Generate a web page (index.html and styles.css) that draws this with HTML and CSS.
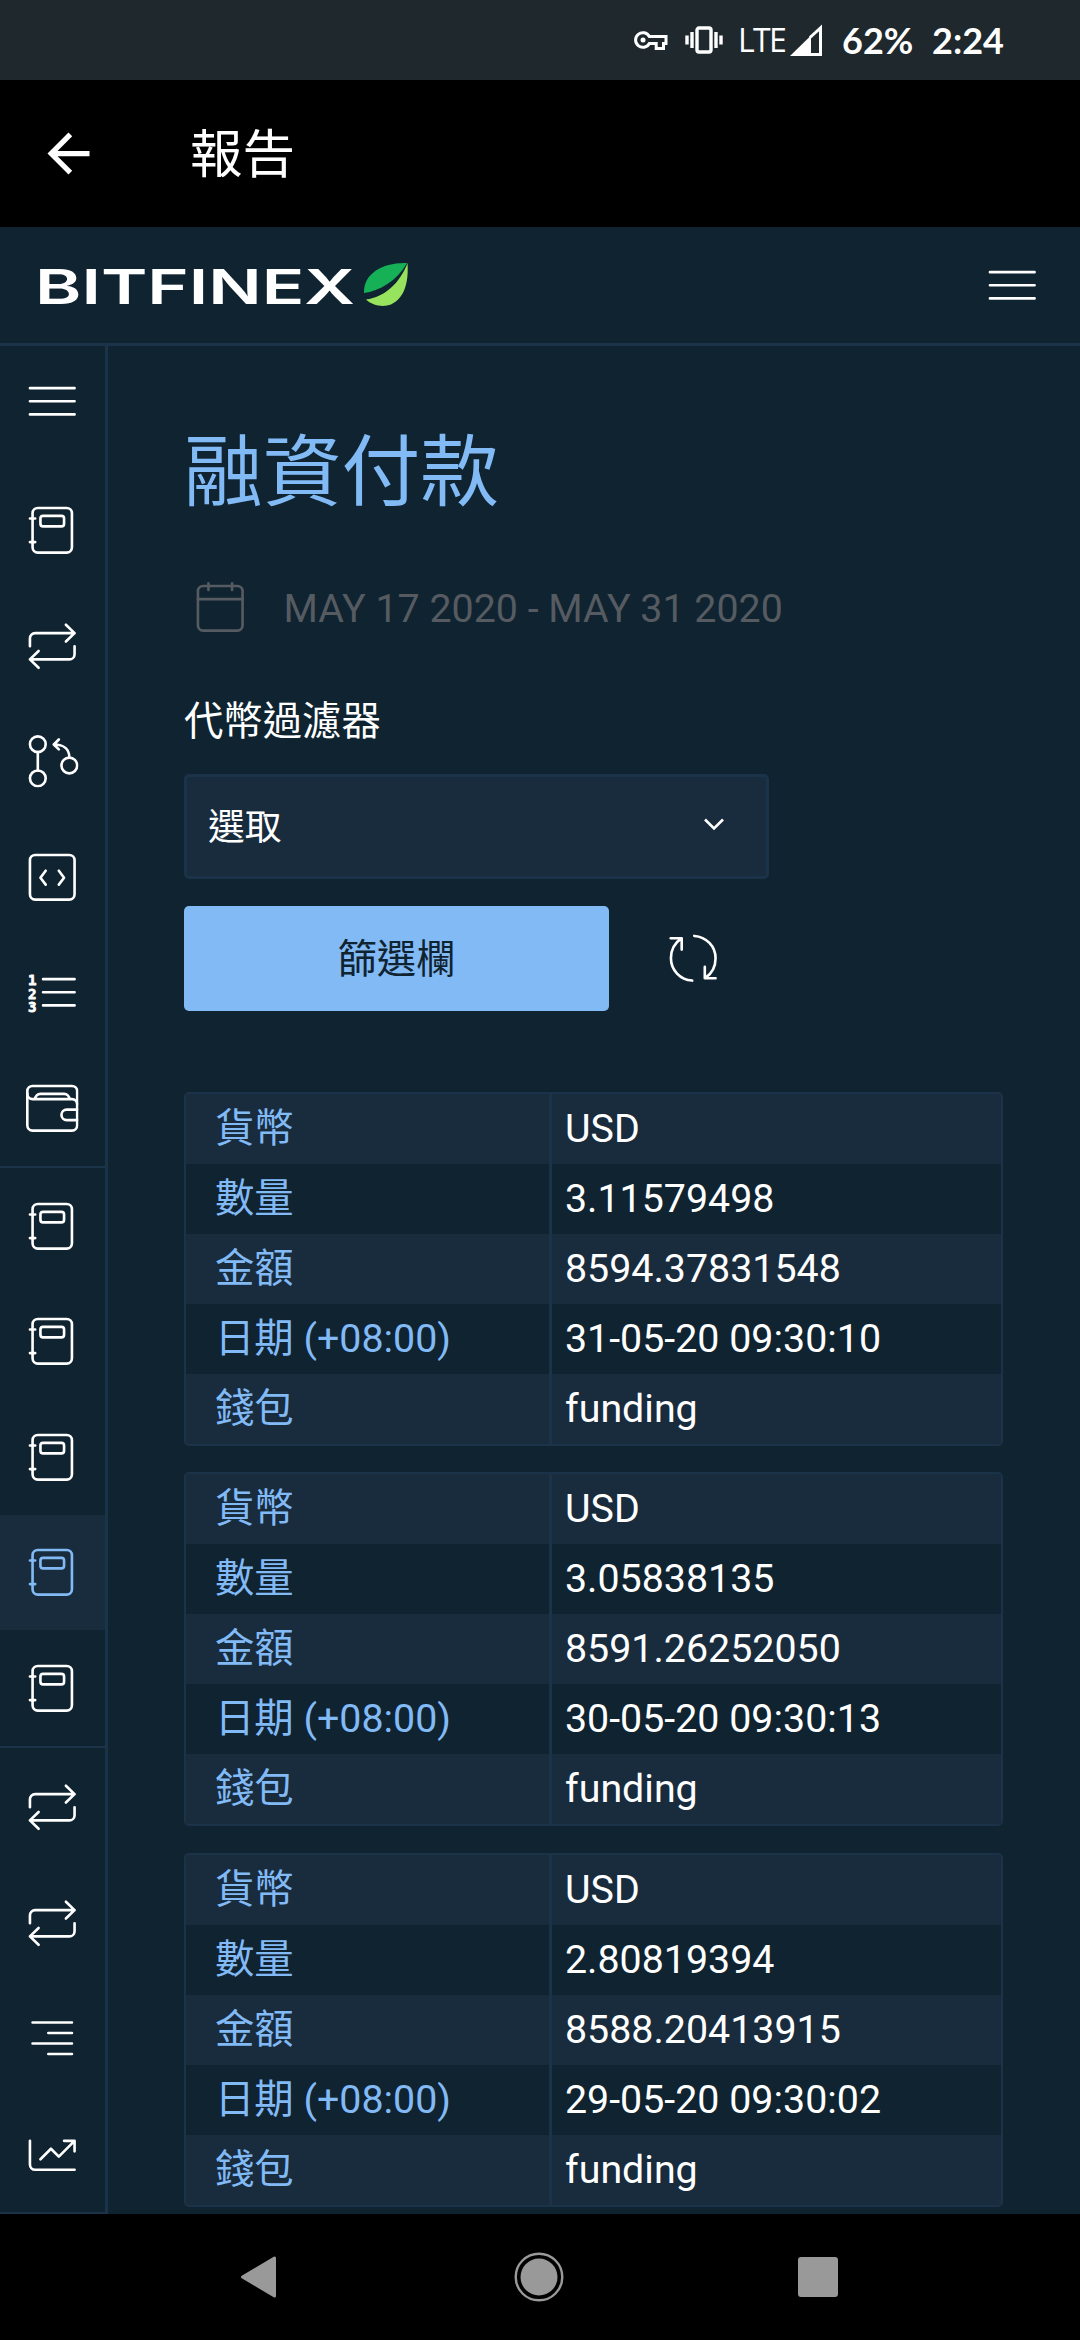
FILE: index.html
```html
<!DOCTYPE html>
<html lang="zh-Hant">
<head>
<meta charset="utf-8">
<title>報告</title>
<link rel="stylesheet" href="styles.css">
</head>
<body>

<svg class="sprite">
  <symbol id="menu" viewBox="0 0 20 20"><path d="M1.5 5h17M1.5 10h17M1.5 15h17"/></symbol>
  <symbol id="book" viewBox="0 0 20 20">
    <rect x="2.5" y="1.5" width="15" height="17" rx="2"/>
    <rect x="5.5" y="4.5" width="9" height="4" rx="1"/>
    <path d="M1.5 5.5h2M1.5 14.5h2"/>
  </symbol>
  <symbol id="swap" viewBox="0 0 20 20">
    <path d="M1.5 10V7a2 2 0 0 1 2-2h15M15.2 1.8 18.5 5l-3.3 3.2M18.5 10v3a2 2 0 0 1-2 2h-15M4.8 11.8 1.5 15l3.3 3.2"/>
  </symbol>
  <symbol id="branch" viewBox="0 0 20 20">
    <circle cx="4.5" cy="3.5" r="3"/><circle cx="4.5" cy="16.5" r="3"/><circle cx="16.5" cy="11.6" r="3"/>
    <path d="M4.5 6.5v7M16.5 8.5c0-3-2-4.9-5.8-4.9M12.5 1.7l-1.9 1.9 1.9 1.9"/>
  </symbol>
  <symbol id="code" viewBox="0 0 20 20">
    <rect x="1.5" y="1.5" width="17" height="17" rx="2"/>
    <path d="M7.5 7.5l-2 2.7 2 2.6M12.5 7.5l2 2.7-2 2.6"/>
  </symbol>
  <symbol id="list" viewBox="0 0 20 20">
    <path d="M6.500 5h12M6.500 10h12M6.500 15h12"/>
    <text x=".8" y="7.300">1</text><text x=".8" y="12.400">2</text><text x=".8" y="17.400">3</text>
  </symbol>
  <symbol id="wallet" viewBox="0 0 20 20">
    <rect x=".5" y="1.5" width="19" height="17" rx="2"/>
    <path d="M.5 4.5a2 2 0 0 0 2 2h15a2 2 0 0 1 2 2M3.5 6.5a2 2 0 0 1 2-2h9a2 2 0 0 1 2 2M19.5 10.5h-4a2 2 0 0 0 0 4h4"/>
  </symbol>
  <symbol id="align" viewBox="0 0 20 20"><path d="M2.5 4h15M8.5 8h9M2.5 12h15M8.5 16h9"/></symbol>
  <symbol id="chart" viewBox="0 0 20 20">
    <path d="M1.5 4.900v9a2 2 0 0 0 2 2h15M5.500 11.900l4-4 3 3 6-6M14.500 4.900h4v4"/>
  </symbol>
</svg>

<div class="statusbar">
  <svg class="key" width="34" height="20" viewBox="0 0 34 20">
    <path d="M15.3 6.5H32v7h-2.500v5h-7.300v-5h-6.900a7.300 7.300 0 1 1 0-7z"/>
    <circle cx="9" cy="10" r="2.5"/>
  </svg>
  <svg class="vibrate" width="38" height="28" viewBox="0 0 38 28">
    <rect x="12" y="2" width="14" height="24" rx="2"/>
    <path d="M7 6v16M2 9.500v9M31 6v16M36 9.500v9"/>
  </svg>
  <span class="lte">LTE</span>
  <svg class="signal" width="33" height="33" viewBox="0 0 33 33">
    <path class="outline" d="M20 13.500 30.500 4v26.500H20"/>
    <path class="fill" d="M0 32 21 11.500V32z"/>
  </svg>
  <span class="battery">62%</span>
  <span class="clock">2:24</span>
</div>

<div class="appbar">
  <svg width="63" height="63" viewBox="0 0 24 24"><path d="M20 11H7.83l5.590-5.590L12 4l-8 8 8 8 1.410-1.410L7.830 13H20v-2z"/></svg>
  <span>報告</span>
</div>

<header class="header">
  <svg class="logo" width="378" height="48" viewBox="-4 0 378 48">
    <text x="-3" y="42.500" textLength="320" lengthAdjust="spacingAndGlyphs">BITFINEX</text>
    <path fill="#16b157" d="M369 2C346 1 325 12 326 32c15-2 33-12 43-30z"/>
    <path fill="#97e35e" d="M369.500 2C362 22 347 36 328 38.500c6 6 17 8 25 5C365 38 371 24 369.500 2z"/>
  </svg>
  <svg class="icon"><use href="#menu"/></svg>
</header>

<div class="wrap">
  <nav class="sidebar">
    <div class="toggle"><svg class="icon"><use href="#menu"/></svg></div>
    <div class="group">
      <a class="item"><svg class="icon"><use href="#book"/></svg></a>
      <a class="item"><svg class="icon"><use href="#swap"/></svg></a>
      <a class="item"><svg class="icon"><use href="#branch"/></svg></a>
      <a class="item"><svg class="icon"><use href="#code"/></svg></a>
      <a class="item"><svg class="icon"><use href="#list"/></svg></a>
      <a class="item"><svg class="icon"><use href="#wallet"/></svg></a>
    </div>
    <div class="group">
      <a class="item"><svg class="icon"><use href="#book"/></svg></a>
      <a class="item"><svg class="icon"><use href="#book"/></svg></a>
      <a class="item"><svg class="icon"><use href="#book"/></svg></a>
      <a class="item active"><svg class="icon"><use href="#book"/></svg></a>
      <a class="item"><svg class="icon"><use href="#book"/></svg></a>
    </div>
    <div class="group last">
      <a class="item"><svg class="icon"><use href="#swap"/></svg></a>
      <a class="item"><svg class="icon"><use href="#swap"/></svg></a>
      <a class="item"><svg class="icon"><use href="#align"/></svg></a>
      <a class="item"><svg class="icon"><use href="#chart"/></svg></a>
    </div>
  </nav>

  <main class="content">
    <h1>融資付款</h1>
    <div class="dates">
      <svg class="icon" viewBox="0 0 20 20">
        <rect x="1.5" y="1.5" width="17" height="17" rx="2"/>
        <path d="M1.5 6.5h17M5.5.5v2.500M14.500.5v2.500"/>
      </svg>
      <span>MAY 17 2020 - MAY 31 2020</span>
    </div>
    <div class="label">代幣過濾器</div>
    <div class="select">
      <span>選取</span>
      <svg width="22" height="14" viewBox="0 0 22 14"><path d="M2 2.500l9 9 9-9"/></svg>
    </div>
    <div class="actions">
      <button class="filter">篩選欄</button>
      <svg class="icon" viewBox="0 0 20 20">
        <path d="M9.600 18.500C5 18.200 1.500 14.500 1.500 10c0-3.300 1.600-6 4-7.600M1.400 2.400h4.200v4.300M10.400 1.500c4.600.3 8.100 4 8.100 8.500 0 3.300-1.600 6-4 7.600M18.500 17.600h-4.100v-4.300"/>
      </svg>
    </div>

    <table>
      <tr><th>貨幣</th><td>USD</td></tr>
      <tr><th>數量</th><td>3.11579498</td></tr>
      <tr><th>金額</th><td>8594.37831548</td></tr>
      <tr><th>日期 (+08:00)</th><td>31-05-20 09:30:10</td></tr>
      <tr><th>錢包</th><td>funding</td></tr>
    </table>
    <table>
      <tr><th>貨幣</th><td>USD</td></tr>
      <tr><th>數量</th><td>3.05838135</td></tr>
      <tr><th>金額</th><td>8591.26252050</td></tr>
      <tr><th>日期 (+08:00)</th><td>30-05-20 09:30:13</td></tr>
      <tr><th>錢包</th><td>funding</td></tr>
    </table>
    <table>
      <tr><th>貨幣</th><td>USD</td></tr>
      <tr><th>數量</th><td>2.80819394</td></tr>
      <tr><th>金額</th><td>8588.20413915</td></tr>
      <tr><th>日期 (+08:00)</th><td>29-05-20 09:30:02</td></tr>
      <tr><th>錢包</th><td>funding</td></tr>
    </table>
  </main>
</div>

<div class="navbar">
  <svg width="50" height="50" viewBox="0 0 50 50"><path d="M8.5 25 40.5 6v38z" stroke-width="3" stroke-linejoin="round"/></svg>
  <svg width="50" height="50" viewBox="0 0 50 50"><circle cx="25" cy="25" r="18.5" stroke="none"/><circle cx="25" cy="25" r="23.3" fill="none" stroke-width="2.4"/></svg>
  <svg width="50" height="50" viewBox="0 0 50 50"><rect x="5" y="5" width="40" height="40" rx="3" stroke="none"/></svg>
</div>

</body>
</html>
```
FILE: styles.css
```css
* {
  box-sizing: border-box;
}
body {
  margin: 0;
  width: 1080px;
  height: 2340px;
  overflow: hidden;
  display: flex;
  flex-direction: column;
  background: #102331;
  color: #fff;
  font-family: Roboto, "Noto Sans CJK TC", sans-serif;
  font-size: 39.375px;
}
svg {
  display: block;
  flex: none;
}
.sprite {
  display: none;
}
.icon {
  width: 52.5px;
  height: 52.5px;
  fill: none;
  stroke: currentColor;
  stroke-width: 1;
  stroke-linecap: round;
  stroke-linejoin: round;
}
symbol text {
  font: bold 5.4px "DejaVu Sans Mono", monospace;
  fill: currentColor;
  stroke-width: .3;
}

/* android bars */
.statusbar {
  flex: none;
  height: 80px;
  padding-right: 77px;
  display: flex;
  align-items: center;
  justify-content: flex-end;
  background: #1e282d;
}
.key {
  fill: none;
  stroke: #fff;
  stroke-width: 3;
}
.key circle {
  fill: #fff;
  stroke: none;
}
.vibrate {
  margin-left: 17px;
  fill: none;
  stroke: #fff;
  stroke-width: 3.4;
}
.lte {
  width: 46px;
  margin-left: 15px;
  padding-bottom: 1px;
  font-family: "Open Sans", sans-serif;
  font-size: 32px;
  font-weight: 400;
  letter-spacing: -1.7px;
}
.signal {
  margin-left: 6px;
}
.signal .outline {
  fill: none;
  stroke: #fff;
  stroke-width: 3;
}
.signal .fill {
  fill: #fff;
}
.battery, .clock {
  width: 71px;
  margin-left: 19px;
  font-family: Lato, sans-serif;
  font-size: 36px;
  font-weight: bold;
}
.appbar {
  flex: none;
  height: 147px;
  padding-left: 37px;
  display: flex;
  align-items: center;
  gap: 90px;
  background: #000;
  font-size: 52.5px;
}
.appbar svg {
  fill: #fff;
}
.appbar span {
  padding-bottom: 7px;
}

.header {
  flex: none;
  height: 119px;
  padding: 0 42px 0 34px;
  display: flex;
  align-items: center;
  justify-content: space-between;
  border-bottom: 3px solid #1a3349;
}
.logo text {
  font-family: Inter, sans-serif;
  font-size: 47.5px;
  font-weight: 600;
  fill: #fff;
}

.wrap {
  flex: none;
  height: 1868px;
  display: flex;
  overflow: hidden;
}
.sidebar {
  width: 108px;
  border-right: 3px solid #1a3349;
}
.toggle {
  height: 126.5px;
  padding: 29px 0 0 26.25px;
}
.group {
  border-bottom: 2px solid #1a3349;
}
.group + .group {
  padding-top: .6px;
}
.group.last {
  padding-top: 2px;
}
.item {
  height: 115.5px;
  display: flex;
  align-items: center;
  justify-content: center;
}
.item.active {
  background: #182c3d;
  color: #82baf6;
}

.content {
  flex: 1;
  padding: 72px 77px 0 76px;
}
h1 {
  margin: 0;
  height: 110px;
  line-height: 110px;
  font-size: 78.75px;
  font-weight: 400;
  color: #82baf6;
}
.dates {
  height: 60px;
  margin-top: 50px;
  padding-left: 10px;
  display: flex;
  align-items: center;
  gap: 37px;
  color: #555b60;
}
.label {
  height: 60px;
  margin-top: 54px;
  line-height: 60px;
}
.select {
  width: 585px;
  height: 105px;
  margin-top: 22px;
  padding: 0 41px 5px 21px;
  display: flex;
  align-items: center;
  justify-content: space-between;
  background: #182c3d;
  border: 3px solid #1a3349;
  border-radius: 5px;
  font-size: 36.75px;
}
.select svg {
  fill: none;
  stroke: #fff;
  stroke-width: 2.6;
}
.actions {
  margin: 27px 0 81px;
  display: flex;
  align-items: center;
  gap: 58px;
}
.filter {
  width: 425px;
  height: 105px;
  padding: 0 0 7px;
  border: 0;
  border-radius: 5px;
  background: #82baf6;
  color: #102331;
  font: inherit;
}

table {
  width: 819px;
  margin-bottom: 26.25px;
  border: 2px solid #1a3349;
  border-radius: 5px;
  border-spacing: 0;
  table-layout: fixed;
}
tr:nth-child(odd) {
  background: #182c3d;
}
th, td {
  height: 70px;
  padding: 0;
  line-height: 68px;
  font-weight: 400;
  text-align: left;
}
th {
  width: 366px;
  padding-left: 29px;
  border-right: 3px solid #1a3349;
  color: #82baf6;
}
td {
  padding-left: 13px;
}

.navbar {
  flex: none;
  height: 126px;
  padding: 0 237px 0 234px;
  display: flex;
  align-items: center;
  justify-content: space-between;
  background: #000;
}
.navbar svg {
  fill: #999;
  stroke: #999;
}
```
